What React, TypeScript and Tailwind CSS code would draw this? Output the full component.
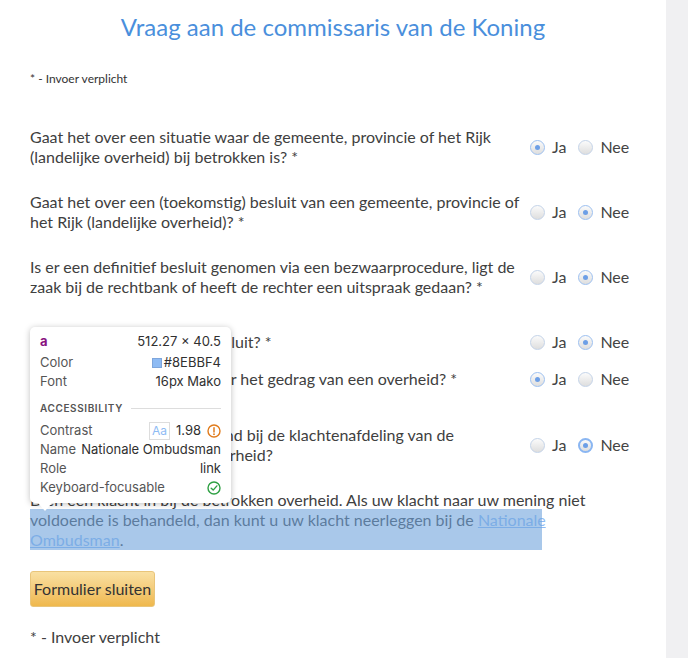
import React from "react";

type Choice = "ja" | "nee";

const questions: { lines: string[]; value: Choice; focus?: boolean; mt: string }[] = [
  {
    lines: [
      "Gaat het over een situatie waar de gemeente, provincie of het Rijk",
      "(landelijke overheid) bij betrokken is? *",
    ],
    value: "ja",
    mt: "mt-[40px]",
  },
  {
    lines: [
      "Gaat het over een (toekomstig) besluit van een gemeente, provincie of",
      "het Rijk (landelijke overheid)? *",
    ],
    value: "nee",
    mt: "mt-[25px]",
  },
  {
    lines: [
      "Is er een definitief besluit genomen via een bezwaarprocedure, ligt de",
      "zaak bij de rechtbank of heeft de rechter een uitspraak gedaan? *",
    ],
    value: "nee",
    mt: "mt-[25px]",
  },
  {
    lines: ["Gaat het om een politiek besluit? *"],
    value: "nee",
    mt: "mt-[35px]",
  },
  {
    lines: ["Gaat het over een klacht over het gedrag van een overheid? *"],
    value: "ja",
    mt: "mt-[17px]",
  },
  {
    lines: [
      "Heeft u uw klacht al ingediend bij de klachtenafdeling van de",
      "de betrokken (landelijke) overheid?",
    ],
    value: "nee",
    focus: true,
    mt: "mt-[36px]",
  },
];

function Radio({ checked, focus }: { checked: boolean; focus?: boolean }) {
  return (
    <span
      className={
        "flex h-[15px] w-[15px] shrink-0 items-center justify-center rounded-full bg-gradient-to-b from-[#fbfbfb] to-[#dedede] " +
        (focus
          ? "border-2 border-[#8ab6f2]"
          : checked
            ? "border border-[#9dc0f0]"
            : "border border-[#c4d3e8]")
      }
    >
      {checked && <span className="h-[5px] w-[5px] rounded-full bg-[#6d9fe6]" />}
    </span>
  );
}

function RadioGroup({ value, focus }: { value: Choice; focus?: boolean }) {
  return (
    <div className="flex h-[20px] items-center text-[16px] leading-[20px] text-[#444]">
      <Radio checked={value === "ja"} />
      <span className="ml-[7px]">Ja</span>
      <span className="ml-[12px]">
        <Radio checked={value === "nee"} focus={focus} />
      </span>
      <span className="ml-[7px]">Nee</span>
    </div>
  );
}

function Inspector() {
  return (
    <div className="absolute left-[30px] top-[327px] w-[201px] rounded-[5px] bg-white px-[10px] pb-[6px] pt-[5px] text-[13px] leading-[19px] text-[#303030] shadow-[0_1px_6px_rgba(0,0,0,0.25)] font-['Inter','Liberation_Sans',sans-serif]">
      <div className="mb-[2px] flex justify-between">
        <span className="font-bold text-[#881280]">a</span>
        <span>512.27 × 40.5</span>
      </div>
      <div className="flex justify-between">
        <span className="text-[#555]">Color</span>
        <span className="flex items-center gap-[2px]">
          <span className="h-[10px] w-[10px] border border-[#7ea6dc] bg-[#8ebbf4]" />
          #8EBBF4
        </span>
      </div>
      <div className="flex justify-between">
        <span className="text-[#555]">Font</span>
        <span>16px Mako</span>
      </div>
      <div className="mt-[8px] flex items-center gap-[8px] text-[10px] font-semibold tracking-[0.06em] text-[#555]">
        ACCESSIBILITY
        <span className="h-px flex-1 bg-[#ddd]" />
      </div>
      <div className="mt-[3px] flex items-center justify-between">
        <span className="text-[#555]">Contrast</span>
        <span className="flex items-center gap-[6px]">
          <span className="border border-[#ddd] px-[2px] text-[12px] leading-[16px] text-[#8ebbf4]">Aa</span>
          <span>1.98</span>
          <svg width="14" height="14" viewBox="0 0 14 14" fill="none">
            <circle cx="7" cy="7" r="6" stroke="#e07b1c" strokeWidth="1.4" />
            <line x1="7" y1="3.8" x2="7" y2="8" stroke="#e07b1c" strokeWidth="1.5" strokeLinecap="round" />
            <circle cx="7" cy="10.2" r="0.9" fill="#e07b1c" />
          </svg>
        </span>
      </div>
      <div className="flex justify-between">
        <span className="text-[#555]">Name</span>
        <span>Nationale Ombudsman</span>
      </div>
      <div className="flex justify-between">
        <span className="text-[#555]">Role</span>
        <span>link</span>
      </div>
      <div className="flex items-center justify-between">
        <span className="text-[#555]">Keyboard-focusable</span>
        <svg width="14" height="14" viewBox="0 0 14 14" fill="none">
          <circle cx="7" cy="7" r="6" stroke="#2ea043" strokeWidth="1.4" />
          <path d="M4.2 7.2 L6.2 9.1 L9.9 4.9" stroke="#2ea043" strokeWidth="1.4" strokeLinecap="round" strokeLinejoin="round" />
        </svg>
      </div>
      <span className="absolute -bottom-[8px] left-[8px] h-0 w-0 border-x-[7px] border-t-[8px] border-x-transparent border-t-white" />
    </div>
  );
}

export default function App() {
  return (
    <div className="flex min-h-[658px] w-full font-['Lato','Open_Sans',sans-serif]">
      <div className="relative w-[666px] shrink-0 bg-white pb-[12px] pl-[30px] pr-[30px] text-[#404040]">
        <h1 className="pt-[10px] text-center text-[24px] leading-[34px] text-[#4a8fdc]">
          Vraag aan de commissaris van de Koning
        </h1>
        <p className="mt-[27px] text-[12px] leading-[16px] text-[#333]">* - Invoer verplicht</p>

        {questions.map((q, i) => (
          <div key={i} className={"flex items-center " + q.mt}>
            <p className="w-[500px] shrink-0 whitespace-nowrap text-[16px] leading-[20px]">
              {q.lines.map((l, j) => (
                <span key={j} className="block">
                  {l}
                </span>
              ))}
            </p>
            <RadioGroup value={q.value} focus={q.focus} />
          </div>
        ))}

        <div className="relative mt-[25px] text-[16px] leading-[20px]">
          <p>
            Dien een klacht in bij de betrokken overheid. Als uw klacht naar uw mening niet
            <br />
            voldoende is behandeld, dan kunt u uw klacht neerleggen bij de{" "}
            <a href="#" className="text-[#8ebbf4] underline">
              Nationale
              <br />
              Ombudsman
            </a>
            .
          </p>
          <div className="pointer-events-none absolute left-0 top-[19px] h-[40.5px] w-[512px] bg-[#6fa3dc]/60" />
        </div>

        <button
          type="button"
          className="mt-[21px] h-[36px] w-[125px] rounded-[3px] border border-[#e9c57a] bg-gradient-to-b from-[#f9e0a2] to-[#efb84c] text-[16px] text-[#333]"
        >
          Formulier sluiten
        </button>

        <p className="mt-[20px] text-[16px] leading-[20px] text-[#404040]">* - Invoer verplicht</p>

        <Inspector />
      </div>
      <div className="flex-1 bg-[#f0f0f2]" />
    </div>
  );
}
